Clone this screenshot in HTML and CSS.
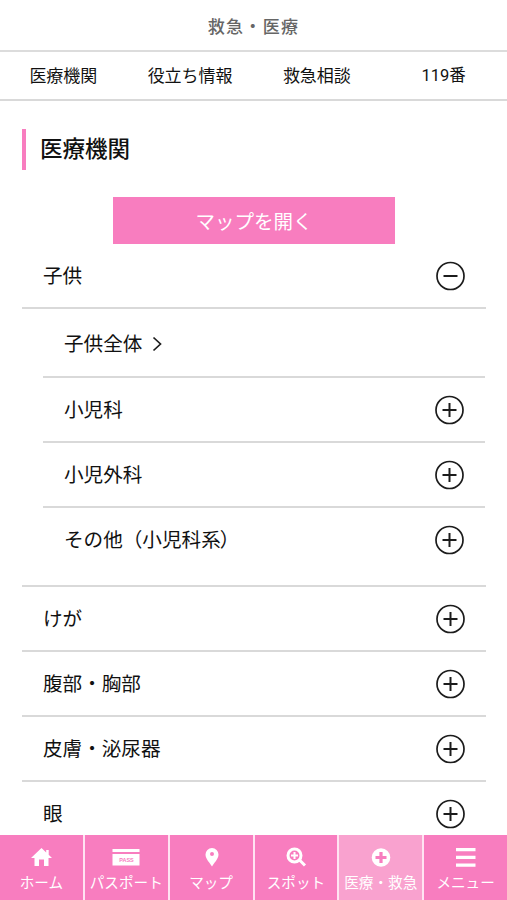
FILE: index.html
```html
<!DOCTYPE html>
<html lang="ja">
<head>
<meta charset="utf-8">
<meta name="viewport" content="width=device-width, initial-scale=1">
<title>救急・医療</title>
<link rel="stylesheet" href="styles.css">
</head>
<body>
<svg class="defs" aria-hidden="true">
  <symbol id="plus" viewBox="0 0 30 30"><circle cx="14.500" cy="15" r="13.500"/><path class="bar" d="M7.500 15h14M14.500 8v14"/></symbol>
  <symbol id="minus" viewBox="0 0 30 30"><circle cx="14.500" cy="15" r="13.500"/><path class="bar" d="M7.500 15h14"/></symbol>
</svg>
<div class="app">
  <header class="title"><span>救急・医療</span></header>
  <nav class="tabs">
    <a><span>医療機関</span></a><a><span>役立ち情報</span></a><a><span>救急相談</span></a><a><span class="number">119番</span></a>
  </nav>
  <main class="content">
    <h1 class="heading"><span>医療機関</span></h1>
    <button class="map-button"><span>マップを開く</span></button>
    <section class="list">
      <div class="row first"><span>子供</span><svg class="toggle"><use href="#minus"/></svg></div>
      <div class="sub">
        <div class="row all"><span>子供全体</span><svg class="chevron" viewBox="0 0 10 16"><path d="M1.500 1.500 8.500 8l-7 6.500"/></svg></div>
        <div class="row"><span>小児科</span><svg class="toggle"><use href="#plus"/></svg></div>
        <div class="row"><span>小児外科</span><svg class="toggle"><use href="#plus"/></svg></div>
        <div class="row last"><span>その他（小児科系<span class="close">）</span></span><svg class="toggle"><use href="#plus"/></svg></div>
      </div>
      <div class="row"><span>けが</span><svg class="toggle"><use href="#plus"/></svg></div>
      <div class="row"><span>腹部・胸部</span><svg class="toggle"><use href="#plus"/></svg></div>
      <div class="row"><span>皮膚・泌尿器</span><svg class="toggle"><use href="#plus"/></svg></div>
      <div class="row"><span>眼</span><svg class="toggle"><use href="#plus"/></svg></div>
    </section>
  </main>
  <nav class="bottom">
    <a><svg class="icon" viewBox="0 0 28 20"><path d="M14.500 1 4 11h3.500v8H12v-6.500h5V19h4.500v-8H25l-3.300-3.200V3h-2.500v2.400z"/></svg><span>ホーム</span></a>
    <a><svg class="icon" viewBox="0 0 28 20"><path d="M.5 2h27v3H.5zM.5 7h27v11.500H.5z"/><text x="14.500" y="15.300" class="pass">PASS</text></svg><span>パスポート</span></a>
    <a><svg class="icon" viewBox="0 0 28 20"><path fill-rule="evenodd" d="M15 1a6.500 6.500 0 0 0-6.500 6.500C8.500 12 13 16 15 19.500 17 16 21.500 12 21.500 7.500A6.500 6.500 0 0 0 15 1zm0 4a2 2 0 1 1 0 4 2 2 0 0 1 0-4z"/></svg><span>マップ</span></a>
    <a><svg class="icon line" viewBox="0 0 28 20"><circle cx="12.500" cy="8.500" r="6.500"/><path d="m17.500 13 5.500 5.500"/><path class="thin" d="M9 8.500h7M12.500 5v7"/></svg><span>スポット</span></a>
    <a class="active"><svg class="icon" viewBox="0 0 28 20"><circle cx="14" cy="10.500" r="9.300"/><path class="cross" d="M8.500 10.500h11M14 5v11"/></svg><span>医療・救急</span></a>
    <a><svg class="icon" viewBox="0 0 28 20"><path d="M4 1h19.500v3.300H4zM4 8.700h19.500V12H4zM4 16.500h19.500v3.300H4z"/></svg><span>メニュー</span></a>
  </nav>
</div>
</body>
</html>
```
FILE: styles.css
```css
* { box-sizing: border-box; }
body {
  margin: 0;
  background: #fff;
  color: #111;
  font-family: "Noto Sans CJK JP", sans-serif;
}
.defs { display: none; }
.app {
  height: 900px;
  display: flex;
  flex-direction: column;
  overflow: hidden;
}
.title {
  flex: none;
  height: 52px;
  display: flex;
  align-items: center;
  justify-content: center;
  padding-top: 1px;
  border-bottom: 2px solid #dcdcdc;
  color: #666;
  font-size: 17px;
  font-weight: 500;
  letter-spacing: 1.3px;
  line-height: 24px;
}
.tabs {
  flex: none;
  height: 49px;
  display: grid;
  grid-template-columns: repeat(4, 1fr);
  align-items: center;
  padding-bottom: 1px;
  border-bottom: 2px solid #d9d9d9;
  font-size: 17px;
  line-height: 24px;
  text-align: center;
}
.number { font-family: Roboto, "Noto Sans CJK JP", sans-serif; font-size: 16.500px; }
.content {
  flex: 1;
  min-height: 0;
  padding: 28px 21px 0 22px;
  overflow: hidden;
}
.heading {
  display: flex;
  align-items: center;
  height: 41px;
  margin: 0 0 27px;
  padding-left: 14px;
  border-left: 4px solid #f87dbf;
  font-size: 22.500px;
  font-weight: 500;
  line-height: 32px;
}
.heading > span { padding-bottom: 5px; }
.map-button {
  display: block;
  width: 282px;
  height: 47px;
  margin: 0 auto;
  padding: 0;
  border: 0;
  background: #f87dbf;
  color: #fff;
  font: 19.500px/28px "Noto Sans CJK JP", sans-serif;
}
.row {
  height: 65px;
  display: flex;
  align-items: center;
  justify-content: space-between;
  padding: 0 20px 0 21px;
  border-bottom: 2px solid #d9d9d9;
  font-size: 19.600px;
  line-height: 28px;
}
.row > span { padding-bottom: 1px; }
.row .close { margin-left: -1px; }
.toggle {
  width: 30px;
  height: 30px;
  fill: none;
  stroke: #1c1c1c;
  stroke-width: 1.7;
}
.bar { stroke-width: 2; }
.sub {
  margin-left: 21px;
  padding: 0 1px 13px 0;
}
.row.all { height: 69px; justify-content: flex-start; gap: 10px; }
.row.all > span { padding: 1px 0 0; }
.row.all .chevron { margin-top: 3px; }
.row.last { border-bottom: 0; height: 64px; }
.row.last > span { padding-bottom: 3px; }
.sub + .row { border-top: 2px solid #d9d9d9; height: 67px; }
.chevron {
  width: 10px;
  height: 16px;
  fill: none;
  stroke: #1c1c1c;
  stroke-width: 1.7;
}
.bottom {
  flex: none;
  height: 65px;
  display: grid;
  grid-template-columns: repeat(6, 1fr);
  gap: 2px;
  background: #ffe3f2;
}
.bottom a {
  display: flex;
  flex-direction: column;
  align-items: center;
  padding-top: 12px;
  background: #f87dbf;
  color: #fff;
  font-size: 14.600px;
  line-height: 20px;
  white-space: nowrap;
}
.bottom .active { background: #f9a2cf; }
.bottom span { margin-top: 5px; }
.icon { width: 28px; height: 20px; fill: #fff; }
.line { fill: none; stroke: #fff; stroke-width: 3; }
.thin { stroke-width: 2; }
.cross { stroke: #f87dbf; stroke-width: 3.200; }
.pass {
  fill: #f87dbf;
  font: bold 5.500px "Liberation Sans", sans-serif;
  text-anchor: middle;
}
```
